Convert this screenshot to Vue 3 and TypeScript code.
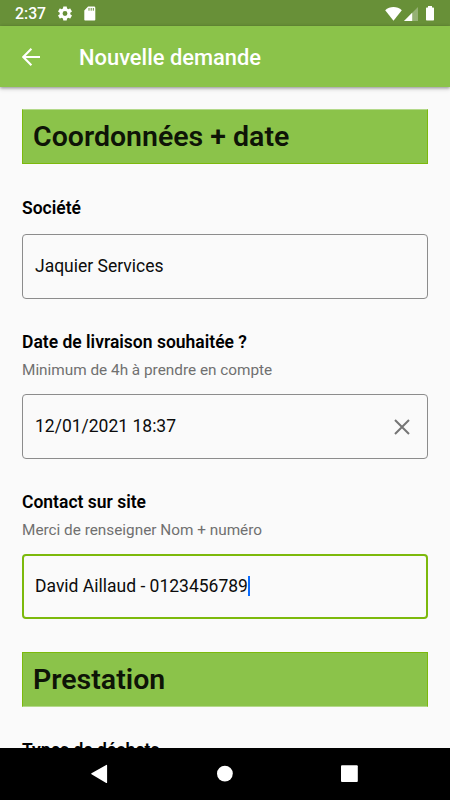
<script setup lang="ts">
import { ref } from 'vue'

interface Field {
  label: string
  hint?: string
  value: string
  clearable?: boolean
  focused?: boolean
}

const fields = ref<Field[]>([
  { label: 'Société', value: 'Jaquier Services' },
  {
    label: 'Date de livraison souhaitée ?',
    hint: 'Minimum de 4h à prendre en compte',
    value: '12/01/2021 18:37',
    clearable: true,
  },
  {
    label: 'Contact sur site',
    hint: 'Merci de renseigner Nom + numéro',
    value: 'David Aillaud - 0123456789',
    focused: true,
  },
])
</script>

<template>
  <div class="screen">
    <div class="status">
      <span class="clock">2:37</span>
      <svg class="gear" viewBox="2.500 2 19 20"><path fill="#fff" d="M19.14 12.94c.04-.3.06-.61.06-.94 0-.32-.02-.64-.07-.94l2.03-1.58c.18-.14.23-.41.12-.61l-1.92-3.32c-.12-.22-.37-.29-.59-.22l-2.39.96c-.5-.38-1.03-.7-1.62-.94l-.36-2.54c-.04-.24-.24-.41-.48-.41h-3.84c-.24 0-.43.17-.47.41l-.36 2.54c-.59.24-1.13.57-1.62.94l-2.39-.96c-.22-.08-.47 0-.59.22L2.74 8.87c-.12.21-.08.47.12.61l2.03 1.58c-.05.3-.09.63-.09.94s.02.64.07.94l-2.03 1.58c-.18.14-.23.41-.12.61l1.92 3.32c.12.22.37.29.59.22l2.39-.96c.5.38 1.03.7 1.62.94l.36 2.54c.05.24.24.41.48.41h3.84c.24 0 .44-.17.47-.41l.36-2.54c.59-.24 1.13-.56 1.62-.94l2.39.96c.22.08.47 0 .59-.22l1.92-3.32c.12-.22.07-.47-.12-.61l-2.01-1.58zM12 15.3A3.3 3.3 0 1 1 12 8.7a3.3 3.3 0 0 1 0 6.600z" /></svg>
      <svg class="card" viewBox="0 0 12 15"><path fill="#fff" d="M4.1.5H10a1.3 1.3 0 0 1 1.3 1.3v11.900a.8.8 0 0 1-.8.800H1.100a.8.8 0 0 1-.8-.8V4.500z" /><path stroke="#689038" stroke-width="1" d="M5 2v2.700M7.200 2v2.700M9.300 2v2.700" /></svg>
      <span class="spacer" />
      <svg class="wifi" viewBox="0 0 18 14" preserveAspectRatio="none"><path fill="#fff" d="M.2 3.300C5-1 13-1 17.800 3.300L9 13.800z" /></svg>
      <svg class="signal" viewBox="0 0 14 14"><path fill="#fff" fill-opacity=".3" d="M14 0v14H0z" /><path fill="#fff" d="M8.200 5.800V14H0z" /></svg>
      <svg class="battery" viewBox="0 0 8 15"><path fill="#fff" d="M2 0h4v1.500h1.300a.7.7 0 0 1 .7.7v11.600a.7.7 0 0 1-.7.700H.7a.7.7 0 0 1-.7-.7V2.200a.7.7 0 0 1 .7-.7H2z" /></svg>
    </div>

    <header class="appbar">
      <svg class="back" viewBox="0 0 18 18"><path fill="none" stroke="#fff" stroke-width="2.100" d="M18 9H1.600M9.400.8 1.300 9l8.100 8.200" /></svg>
      <h1 class="title">Nouvelle demande</h1>
    </header>

    <main class="form">
      <h2 class="section">Coordonnées + date</h2>
      <section v-for="f in fields" :key="f.label" class="field">
        <div class="label">{{ f.label }}</div>
        <div v-if="f.hint" class="hint">{{ f.hint }}</div>
        <div class="box" :class="{ focused: f.focused }">
          <span class="value">{{ f.value }}</span>
          <span v-if="f.focused" class="caret" />
          <svg v-if="f.clearable" class="clear" viewBox="0 0 16 16"><path fill="none" stroke="#757575" stroke-width="2" d="M1 1l14 14M15 1L1 15" /></svg>
        </div>
      </section>
      <h2 class="section">Prestation</h2>
      <div class="label">Types de déchets</div>
    </main>

    <nav class="nav">
      <svg viewBox="0 0 450 52">
        <path fill="#fff" d="M106.200 16.900a.6.6 0 0 1 .9.500v17a.6.6 0 0 1-.9.500L91.500 26.200a.6.6 0 0 1 0-1z" />
        <circle cx="224.900" cy="25.600" r="7.900" fill="#fff" />
        <rect x="341" y="17.300" width="16.800" height="16.800" rx="1" fill="#fff" />
      </svg>
    </nav>
  </div>
</template>

<style>
body {
  margin: 0;
  background: #fafafa;
}
</style>

<style scoped>
.screen {
  display: flex;
  flex-direction: column;
  width: 450px;
  height: 800px;
  overflow: hidden;
  background: #fafafa;
  color: #0c0c0c;
  font-family: Roboto, sans-serif;
}
.status {
  flex: none;
  display: flex;
  align-items: center;
  box-sizing: border-box;
  height: 26px;
  padding: 1px 16px 0 15px;
  background: #689038;
}
.clock {
  width: 44px;
  color: #fff;
  font-size: 15.800px;
  font-weight: 500;
  line-height: 26px;
}
.gear {
  width: 14px;
  height: 15px;
  margin-left: -1px;
}
.card {
  width: 12px;
  height: 15px;
  margin-left: 12px;
}
.spacer {
  flex: 1;
}
.wifi {
  width: 17px;
  height: 14px;
}
.signal {
  width: 14px;
  height: 14px;
  margin: 0 8px 0 2px;
}
.battery {
  width: 8px;
  height: 15px;
}
.appbar {
  flex: none;
  display: flex;
  align-items: center;
  height: 61px;
  padding-left: 22px;
  background: #8bc34a;
  box-shadow: 0 1px 3px rgba(0, 0, 0, 0.35), 0 2px 5px rgba(0, 0, 0, 0.12);
  z-index: 1;
}
.back {
  width: 18px;
  height: 18px;
}
.title {
  margin: 0 0 0 39px;
  padding-top: 2px;
  color: #fff;
  font-size: 21.900px;
  font-weight: 500;
  line-height: 26px;
}
.form {
  flex: 1;
  min-height: 0;
  overflow: hidden;
  padding: 22px 22px 0;
}
.section {
  box-sizing: border-box;
  height: 55px;
  margin: 0 0 33px;
  padding-left: 10px;
  border: 1px solid #7cb90c;
  background: #8bc34a;
  color: #0e1407;
  font-size: 28.500px;
  font-weight: 600;
  line-height: 53px;
}
.section:first-child {
  border-top-color: #b4d98b;
}
.section:not(:first-child) {
  border-bottom-color: #b4d98b;
}
.field {
  margin-bottom: 33px;
}
.label {
  color: #000;
  font-size: 17.500px;
  font-weight: 600;
  line-height: 21px;
}
.field:first-of-type .label {
  padding-top: 1px;
  margin-bottom: -1px;
}
.hint {
  margin-top: 7px;
  color: #707070;
  font-size: 15.330px;
  line-height: 20px;
}
.box {
  display: flex;
  align-items: center;
  box-sizing: border-box;
  height: 65px;
  margin-top: 16px;
  padding: 0 17px 0 12px;
  border: 1px solid #8c8c8c;
  border-radius: 4px;
}
.hint + .box {
  margin-top: 14px;
}
.box.focused {
  padding-left: 11px;
  border: 2px solid #7cb90c;
}
.value {
  padding-bottom: 2px;
  font-size: 17.500px;
}
.caret {
  width: 2px;
  height: 20px;
  margin-bottom: 2px;
  background: #0a6cff;
}
.clear {
  width: 16px;
  height: 16px;
  margin-left: auto;
}
.nav {
  flex: none;
  height: 52px;
  background: #000;
}
.nav svg {
  display: block;
  width: 450px;
  height: 52px;
}
</style>
